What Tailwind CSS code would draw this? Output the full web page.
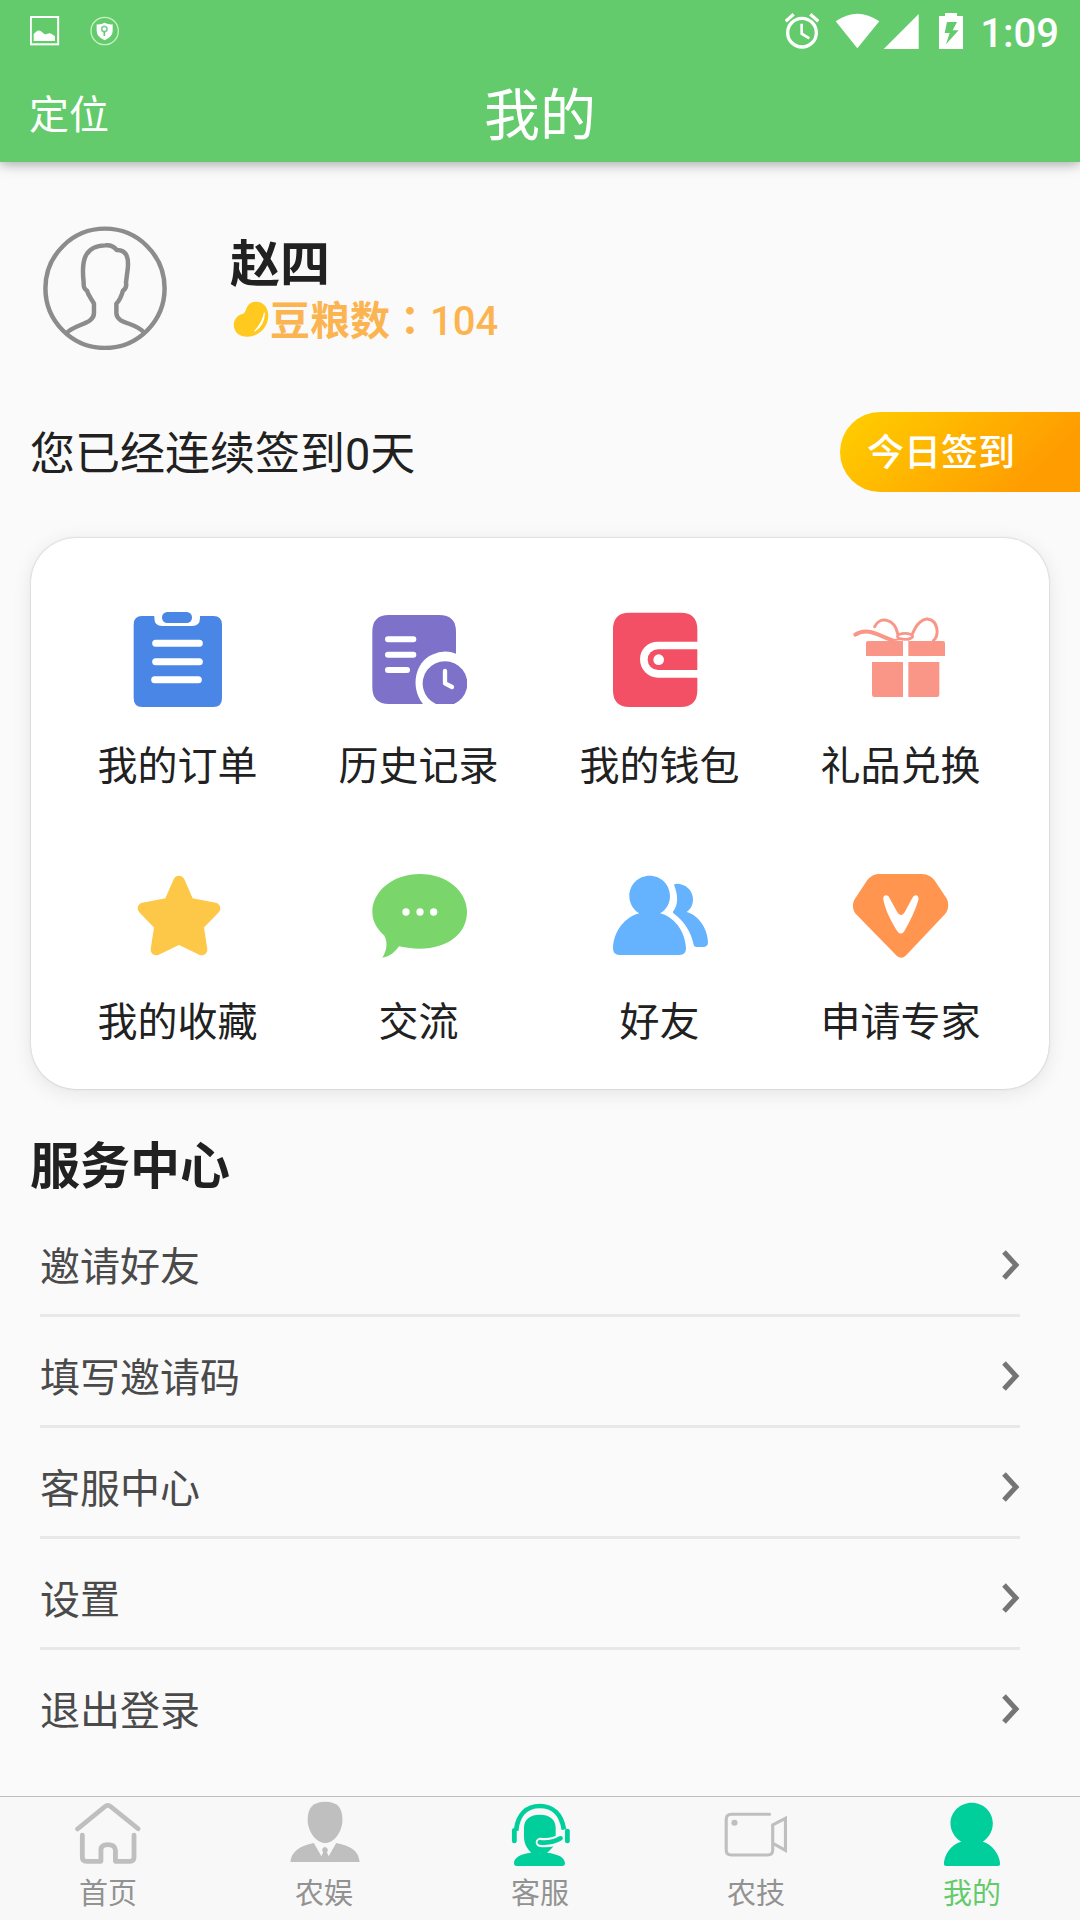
<!DOCTYPE html>
<html lang="zh-CN">
<head>
<meta charset="utf-8">
<meta name="viewport" content="width=device-width, initial-scale=1">
<title>我的</title>
<script src="https://cdn.jsdelivr.net/npm/@tailwindcss/browser@4"></script>
</head>
<body class="flex min-h-screen flex-col bg-[#fafafa] font-[Roboto,'Noto_Sans_CJK_SC',sans-serif] text-[#212121]">

<header class="z-10 bg-[#63cb6b] text-white shadow-[0_2px_12px_rgba(0,0,0,0.35)]">
  <!-- status bar -->
  <div class="flex h-[62px] items-center pr-[21px] pl-[30px]">
    <div class="flex flex-1 items-center gap-[30px]">
      <svg class="size-[30px]" viewBox="90 50 90 90" fill="none"><rect x="92.500" y="53" width="82" height="82" stroke="#fff" stroke-width="6"/><path d="M101 125V104l10-9q6-4 12 1l10 8q4 2 9-1 6-3 12 0l11 8v14z" fill="#fff"/></svg>
      <svg class="size-[30px]" viewBox="268 48 90 90" fill="none"><circle cx="312" cy="93" r="41" stroke="#c6f0c4" stroke-width="4"/><path d="M312 68q10 6 24 5v20q0 17-24 28-24-11-24-28V73q14 1 24-5z" fill="#fff"/><circle cx="311" cy="87" r="8" stroke="#7fcf9b" stroke-width="5"/><path d="M311 93v15" stroke="#63cb6b" stroke-width="5"/></svg>
    </div>
    <div class="flex items-center">
      <svg class="h-9 w-[34px]" viewBox="195 39 102 108" fill="none" stroke="#fff"><circle cx="246" cy="98" r="43" stroke-width="10"/><path d="M197 64l24-21M295 64l-24-21" stroke-width="10"/><path d="M245 71v30l23 14" stroke-width="8"/></svg>
      <svg class="ml-4 h-9 w-[45px]" viewBox="345 39 135 108"><path d="M347 64Q412 18 478 64L412 145z" fill="#fff"/></svg>
      <svg class="ml-[3px] size-9" viewBox="489 39 108 108"><path d="M596 42v105H491z" fill="#fff"/></svg>
      <svg class="ml-5 h-9 w-6" viewBox="657 39 72 108"><path d="M675 39h36v9h18v99h-72V48h18zM681 66l-7 33h15l-11 34 38-42h-18l13-25z" fill="#fff" fill-rule="evenodd"/></svg>
      <span class="ml-[17px] pt-[6px] text-[40px] leading-9 font-medium">1:09</span>
    </div>
  </div>
  <!-- title bar -->
  <div class="grid h-[100px] grid-cols-[1fr_auto_1fr] items-center px-[29px] pt-[7px]">
    <button type="button" class="justify-self-start text-[40px] leading-[60px]">定位</button>
    <h1 class="text-[56px] leading-[80px]">我的</h1>
  </div>
</header>

<main class="flex-1 pt-16 pb-8">
  <section class="flex items-end gap-[63px] px-[43px]">
    <svg class="size-[124px]" viewBox="125 77 360 372" preserveAspectRatio="none" fill="none" stroke="#8c8c8c" stroke-linejoin="round"><ellipse cx="305" cy="264" rx="173" ry="179" stroke-width="13"/><path d="M193 399C215 370 273 373 273 338V310C262 290 256 284 253 271Q242 266 243 246C237 190 240 137 305 135Q328 133 339 149C370 148 374 177 371 205L366 246Q369 264 357 271C353 287 350 297 338 310V338C339 373 395 365 418 397" stroke-width="13"/></svg>
    <div>
      <p class="text-[50px] leading-[50px] font-bold">赵四</p>
      <p class="flex items-center text-[40px] leading-[56px] font-bold text-[#fbb450]">
        <svg class="size-10" viewBox="665 300 116 120" preserveAspectRatio="none"><path d="M676 374c0-18 13-30 27-33 11-4 7-34 35-36 25-1 38 18 38 42 0 34-27 63-61 63-22 0-39-13-39-36z" fill="#ffc91f"/><path d="M765 338q-1 38-29 56 24-26 29-56z" fill="#fff" stroke="#fff" stroke-width="3"/></svg>
        <span>豆粮数<span class="font-['Noto_Sans_CJK_JP']" lang="ja">：</span><span class="font-medium">104</span></span>
      </p>
    </div>
  </section>

  <section class="mt-[62px] flex items-center justify-between pl-[30px]">
    <p class="pt-[5px] text-[45px] leading-[60px]">您已经连续签到0天</p>
    <button type="button" class="h-20 w-60 rounded-l-full bg-linear-[135deg,#ffcc00_5%,#ff9d00_80%] pt-1 pl-[27px] text-left text-[37px] leading-[60px] font-medium text-white">今日签到</button>
  </section>

  <nav class="mx-[31px] mt-[46px] grid grid-cols-4 gap-y-[71px] rounded-[45px] bg-white pt-[74px] pr-7 pb-9 pl-[26px] text-[40px] leading-[60px] shadow-[0_0_2px_rgba(0,0,0,0.25),0_4px_20px_rgba(0,0,0,0.09)]">
    <a href="#" class="flex flex-col items-center gap-[29px]">
      <svg class="size-24" viewBox="90 96 288 288"><path d="M126 108h37v6q0 24 24 24h89q24 0 24-24v-6h40q26 0 26 26v221q0 26-26 26H127q-26 0-26-26V134q0-26 25-26z" fill="#4986e6"/><rect x="186" y="96" width="90" height="33" rx="16" fill="#4986e6"/><path d="M167 190h131M167 245h131M164 299h131" stroke="#fff" stroke-width="21" stroke-linecap="round"/></svg>
      <span>我的订单</span></a>
    <a href="#" class="flex flex-col items-center gap-[29px]">
      <svg class="size-24" viewBox="813 96 288 288"><path d="M867 105h150q51 0 51 50v66q-35-14-72 3c-50 22-67 96-27 148H867q-50 0-50-50V155q0-50 50-50z" fill="#7d71ca"/><path d="M1008 372a67 67 0 1 1 54 0z" fill="#7d71ca"/><path d="M864 178h76M864 224h76M864 270h57" stroke="#fff" stroke-width="18" stroke-linecap="round"/><path d="M1035 273v37l21 11" stroke="#fff" stroke-width="13" stroke-linecap="round" stroke-linejoin="round" fill="none"/></svg>
      <span>历史记录</span></a>
    <a href="#" class="flex flex-col items-center gap-[29px]">
      <svg class="size-24" viewBox="96 96 288 288"><path d="M148 98h154q50 0 50 50v37H234c-30 0-54 22-54 53s24 55 54 55h118v38q0 50-50 50H148q-49 0-49-50V148q0-50 49-50z" fill="#f35065"/><path d="M352 208v62H234a31 31 0 0 1 0-62z" fill="#f35065"/><circle cx="236" cy="239" r="16" fill="#fff"/></svg>
      <span>我的钱包</span></a>
    <a href="#" class="flex flex-col items-center gap-[29px]">
      <svg class="size-24" viewBox="819 96 288 288"><path d="M864 183h105v45H858v-39q0-6 6-6zM985 183h104q6 0 6 6v39H985zM876 246h93v105h-86q-7 0-7-7zM985 246h93v98q0 7-7 7h-86z" fill="#f99688"/><g fill="none" stroke="#f99688" stroke-linecap="round"><path d="M826 164c35-24 70 3 112 17" stroke-width="12"/><path d="M884 140c15-33 60-24 69 21" stroke-width="9"/><path d="M998 160c12-30 30-44 44-43 34 4 36 50 18 65" stroke-width="9"/><ellipse cx="975" cy="169" rx="23" ry="9" stroke-width="8"/><path d="M938 181l30-5M985 179l14-9" stroke-width="6"/></g></svg>
      <span>礼品兑换</span></a>
    <a href="#" class="flex flex-col items-center gap-[29px]">
      <svg class="size-24" viewBox="90 54 288 288"><path d="M237 94l29 66 78 15-50 52 11 72-68-33-68 33 11-72-50-52 78-15z" fill="#fdc748" stroke="#fdc748" stroke-width="34" stroke-linejoin="round"/></svg>
      <span>我的收藏</span></a>
    <a href="#" class="flex flex-col items-center gap-[29px]">
      <svg class="size-24" viewBox="813 54 288 288"><path d="M960 72c81 0 141 51 141 114 0 75-80 130-204 103-12 17-27 31-50 34 12-20 18-43 6-66-23-21-36-44-36-71 0-63 62-114 143-114z" fill="#7ad66b"/><g fill="#fff"><circle cx="918" cy="186" r="11"/><circle cx="960" cy="186" r="11"/><circle cx="1001" cy="186" r="11"/></g></svg>
      <span>交流</span></a>
    <a href="#" class="flex flex-col items-center gap-[29px]">
      <svg class="size-24" viewBox="96 54 288 288" fill="#65b2fe"><path d="M209 77c34 0 61 27 61 61 0 22-11 42-30 52 42 10 76 54 78 105q0 20-19 20H118q-19 0-19-20c1-51 37-95 79-105-18-10-30-30-30-52 0-34 27-61 61-61z"/><path d="M283 107q-2-6 6-6c28 0 50 20 50 47 0 17-7 30-19 38 36 9 64 52 64 92 0 7-6 13-14 13h-20q-8 0-9-7c-7-37-28-71-59-93q-6-4-1-9c15-20 12-50 2-75z"/></svg>
      <span>好友</span></a>
    <a href="#" class="flex flex-col items-center gap-[29px]">
      <svg class="size-24" viewBox="819 54 288 288"><path d="M898 72h128c16 0 31 9 39 21l34 51c8 13 8 35-3 47L977 317q-13 12-27 0L827 191c-10-12-11-32-2-45l35-53c9-13 23-21 38-21z" fill="#ff954f"/><path d="M910 149c-3-14 12-18 18-6l24 44q11 17 22 0l23-43c8-15 22-7 18 7-10 33-26 66-43 94q-10 11-19 0c-18-28-36-62-43-96z" fill="#fff"/></svg>
      <span>申请专家</span></a>
  </nav>

  <h2 class="mt-12 px-[30px] text-[50px] leading-[60px] font-bold">服务中心</h2>
  <ul class="mr-[60px] ml-10 mt-[9px] text-[40px] leading-[60px] text-[#4a4a4a]">
    <li class="border-b-3 border-[#e8e8e8]"><a href="#" class="flex h-[108px] items-center justify-between pt-4"><span>邀请好友</span><svg class="mb-[6px] h-[30px] w-[18px]" viewBox="0 0 18 30" fill="none"><path d="M2 2l12 13L2 28" stroke="#757575" stroke-width="5"/></svg></a></li>
    <li class="border-b-3 border-[#e8e8e8]"><a href="#" class="flex h-[108px] items-center justify-between pt-4"><span>填写邀请码</span><svg class="mb-[6px] h-[30px] w-[18px]" viewBox="0 0 18 30" fill="none"><path d="M2 2l12 13L2 28" stroke="#757575" stroke-width="5"/></svg></a></li>
    <li class="border-b-3 border-[#e8e8e8]"><a href="#" class="flex h-[108px] items-center justify-between pt-4"><span>客服中心</span><svg class="mb-[6px] h-[30px] w-[18px]" viewBox="0 0 18 30" fill="none"><path d="M2 2l12 13L2 28" stroke="#757575" stroke-width="5"/></svg></a></li>
    <li class="border-b-3 border-[#e8e8e8]"><a href="#" class="flex h-[108px] items-center justify-between pt-4"><span>设置</span><svg class="mb-[6px] h-[30px] w-[18px]" viewBox="0 0 18 30" fill="none"><path d="M2 2l12 13L2 28" stroke="#757575" stroke-width="5"/></svg></a></li>
    <li><a href="#" class="flex h-[108px] items-center justify-between pt-4"><span>退出登录</span><svg class="mb-[6px] h-[30px] w-[18px]" viewBox="0 0 18 30" fill="none"><path d="M2 2l12 13L2 28" stroke="#757575" stroke-width="5"/></svg></a></li>
  </ul>
</main>

<nav class="sticky bottom-0 grid grid-cols-5 border-t border-[#bdbdbd] bg-[#f8f8f8] pt-px pb-2 text-[29px] leading-9 text-[#929292]">
  <a href="#" class="flex flex-col items-center gap-2">
    <svg class="h-[70px] w-[72px]" viewBox="209 54 209 210" preserveAspectRatio="none" fill="none" stroke="#bfbfbf" stroke-width="14" stroke-linecap="round" stroke-linejoin="round"><path d="M225 147l79-67q9-8 18 0l79 66"/><path d="M239 165v67q0 12 12 12h42v-34q0-16 20-16t22 16v34h42q12 0 12-12v-67"/></svg>
    <span>首页</span></a>
  <a href="#" class="flex flex-col items-center gap-2">
    <svg class="h-[70px] w-[72px]" viewBox="837 54 209 210" preserveAspectRatio="none" fill="#bfbfbf"><path d="M945 65c36 0 50 18 50 54 0 38-26 70-50 70s-51-32-51-70c0-36 16-54 51-54z"/><path d="M912 189l22 40 5-12q-8-10 5-17 14 7 6 17l5 12 22-40c44 9 65 24 68 57H844c3-31 26-48 68-57z"/></svg>
    <span>农娱</span></a>
  <a href="#" class="flex flex-col items-center gap-2">
    <svg class="h-[70px] w-[72px]" viewBox="-104 54 209 210" preserveAspectRatio="none" fill="none"><path d="M-46 144c0-26 18-40 46-40s46 14 46 40v30c0 20-10 32-25 44 32 4 52 14 52 32q0 8-8 8H-67q-8 0-8-8c0-18 20-29 50-32-14-14-21-28-21-50z" fill="#00cf9c"/><path d="M2 187q34 4 62-13" stroke="#f8f8f8" stroke-width="28" stroke-linecap="round"/><path d="M0 187q34 4 60-12" stroke="#00cf9c" stroke-width="14" stroke-linecap="round"/><path d="M-74 183v-32M80 183v-30" stroke="#00cf9c" stroke-width="14" stroke-linecap="round"/><path d="M-69 152c5-50 32-74 69-74s63 24 70 71" stroke="#00cf9c" stroke-width="14"/></svg>
    <span>客服</span></a>
  <a href="#" class="flex flex-col items-center gap-2">
    <svg class="h-[70px] w-[72px]" viewBox="523 54 209 210" preserveAspectRatio="none" fill="none" stroke="#bfbfbf" stroke-width="9" stroke-linecap="round"><path d="M667 103H556q-15 0-15 15v92q0 15 15 15h105q15 0 15-15v-75l37-20v96l-35-20"/><circle cx="565" cy="128" r="9" fill="#bfbfbf" stroke="none"/></svg>
    <span>农技</span></a>
  <a href="#" aria-current="page" class="flex flex-col items-center gap-2 text-[#63cb6b]">
    <svg class="h-[70px] w-[72px]" viewBox="1150 54 209 210" preserveAspectRatio="none" fill="#00cf9c"><path d="M1254 68c34 0 61 28 61 62 0 22-11 43-29 55 27 8 50 40 50 67q0 6-6 6h-151q-6 0-6-6c0-27 21-59 50-67-19-11-31-33-31-55 0-34 28-62 62-62z"/></svg>
    <span>我的</span></a>
</nav>
</body>
</html>
